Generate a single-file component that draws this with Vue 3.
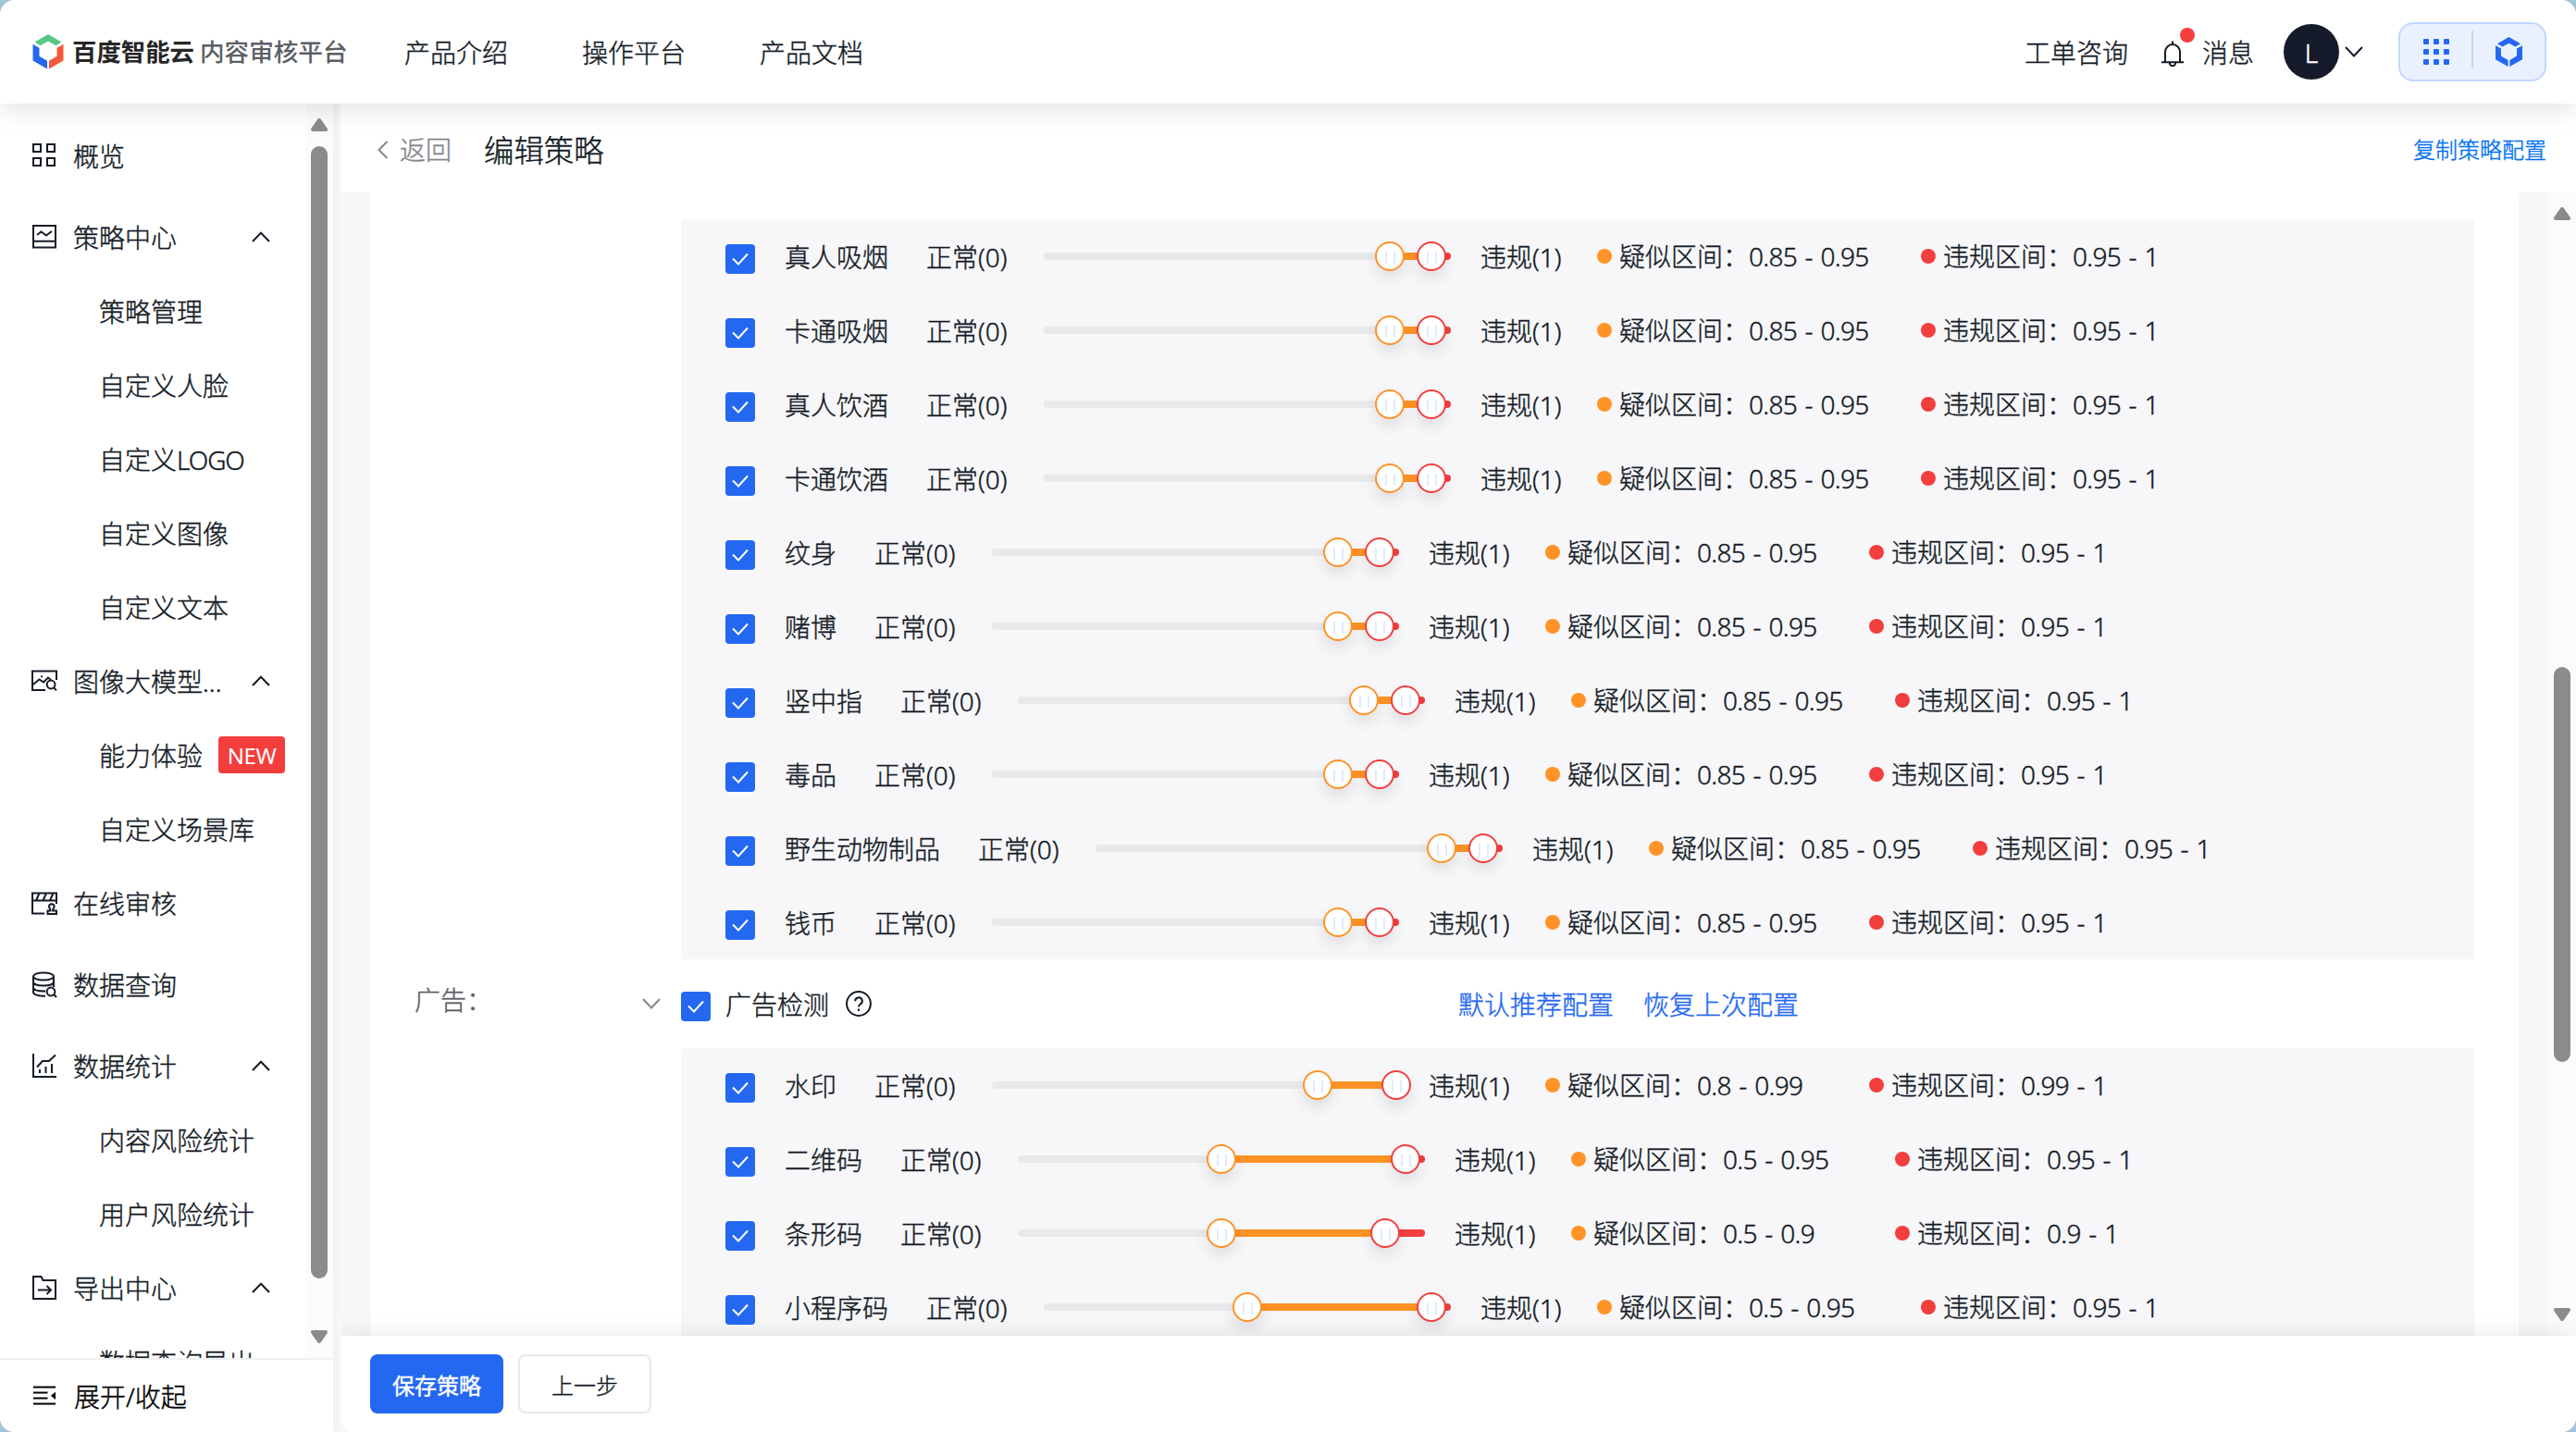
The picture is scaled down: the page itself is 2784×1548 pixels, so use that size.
<template>
  <div class="window">
    <header class="topbar">
      <div class="brand">
        <svg class="brand-mark" viewBox="0 0 34 38">
          <path fill="#57c785" d="M17 0L31.5 8.4L25.5 12.2L17 7.6L8.5 12.2L2.5 8.4z" />
          <path fill="#2468f2" d="M0.5 10.8L7.5 14.8V23.8L16 28.8V37.5L0.5 28.6z" />
          <path fill="#f15a3a" d="M33.5 10.8L26.5 14.8V23.8L18 28.8V37.5L33.5 28.6z" />
        </svg>
        <span class="brand-name">百度智能云</span>
        <span class="brand-sub">内容审核平台</span>
      </div>
      <nav class="topnav">
        <a v-for="link in topLinks" :key="link">{{ link }}</a>
      </nav>
      <div class="topbar-right">
        <span class="ticket">工单咨询</span>
        <span class="message">
          <span class="bell-wrap">
            <svg class="bell" viewBox="0 0 24 28">
              <path d="M12 0.5V4M4 23V12.5a8 8.5 0 0 1 16 0V23M0 23.2H24M8.8 24a3.2 3.2 0 0 0 6.4 0" />
            </svg>
            <i class="bell-dot"></i>
          </span>
          <span class="ticket">消息</span>
        </span>
        <span class="account">
          <span class="avatar">L</span>
          <svg class="account-arrow" viewBox="0 0 20 12"><path d="M1 1L10 10.5L19 1" /></svg>
        </span>
        <div class="switcher">
          <svg class="apps" viewBox="0 0 28 28">
            <template v-for="row in 3" :key="row">
              <rect v-for="col in 3" :key="col" :x="(col - 1) * 11" :y="(row - 1) * 11" width="6" height="6" rx="1" />
            </template>
          </svg>
          <i class="switcher-line"></i>
          <svg class="switcher-mark" viewBox="0 0 29 32">
            <path d="M14.5 0L27 7.2L21.5 10.5L14.5 6.8L7.5 10.5L2 7.2z" />
            <path d="M0 9.3L6 12.6V20.5L13.6 25V32L0 24.2z" />
            <path d="M29 9.3L23 12.6V20.5L15.4 25V32L29 24.2z" />
          </svg>
        </div>
      </div>
    </header>

    <div class="body">
      <aside class="sidebar">
        <div class="menu-scroll">
          <ul class="menu">
            <template v-for="group in menu" :key="group.label">
              <li class="menu-item" :class="{ leaf: !group.children }">
                <svg class="menu-icon" viewBox="0 0 28 28"><path :d="icons[group.icon]" /></svg>
                <span class="menu-label">{{ group.label }}</span>
                <svg v-if="group.children" class="menu-arrow" viewBox="0 0 20 12">
                  <path d="M1 11L10 1.8L19 11" />
                </svg>
              </li>
              <li v-for="child in group.children" :key="child.label" class="menu-item sub">
                <span class="menu-label">{{ child.label }}<span v-if="child.latin" class="latin">{{ child.latin }}</span></span>
                <span v-if="child.isNew" class="new-tag">NEW</span>
              </li>
            </template>
          </ul>
          <div class="scrollbar">
            <svg class="scroll-arrow" viewBox="0 0 18 14"><path d="M9 2L16 12H2z" /></svg>
            <i class="thumb"></i>
            <svg class="scroll-arrow end" viewBox="0 0 18 14"><path d="M9 12L2 2H16z" /></svg>
          </div>
        </div>
        <div class="collapse">
          <svg class="collapse-icon" viewBox="0 0 24 22">
            <path class="line" d="M0 1.5H24M0 7.5H15.5M0 13.5H15.5M0 19.5H24" />
            <path d="M24 6.5V15L19 10.7z" />
          </svg>
          <span class="menu-label">展开/收起</span>
        </div>
      </aside>

      <main class="main">
        <div class="page-head">
          <span class="back">
            <svg class="back-arrow" viewBox="0 0 12 20"><path d="M10.5 1L1.5 10L10.5 19" /></svg>
            返回
          </span>
          <h1>编辑策略</h1>
          <a class="copy">复制策略配置</a>
        </div>

        <div class="content">
          <div class="card">
            <template v-for="section in sections" :key="section.id">
              <div v-if="section.title" class="section-head">
                <span class="section-name">{{ section.name }}</span>
                <svg class="section-arrow" viewBox="0 0 20 12"><path d="M1 1L10 10.5L19 1" /></svg>
                <span class="checkbox">
                  <svg viewBox="0 0 32 32"><path d="M8 15.5L14 21.5L24 10.5" /></svg>
                </span>
                <span class="section-title">{{ section.title }}</span>
                <svg class="help" viewBox="0 0 28 28">
                  <circle cx="14" cy="14" r="12.9" />
                  <path d="M10.2 11.2a3.8 3.8 0 1 1 5.6 3.3c-1.2.7-1.8 1.4-1.8 3M14 19.6V22" />
                </svg>
                <div class="section-links">
                  <a>默认推荐配置</a>
                  <a>恢复上次配置</a>
                </div>
              </div>
              <div class="panel">
                <div v-for="row in section.rows" :key="row.name" class="row">
                  <span class="checkbox">
                    <svg viewBox="0 0 32 32"><path d="M8 15.5L14 21.5L24 10.5" /></svg>
                  </span>
                  <span class="row-name">{{ row.name }}</span>
                  <span class="normal">正常(0)</span>
                  <div class="slider">
                    <i class="bar suspect" :style="{ left: percent(row.low), width: percent(row.high - row.low) }"></i>
                    <i class="bar violate" :style="{ left: percent(row.high), width: percent(1 - row.high) }"></i>
                    <i class="knob" :style="{ left: percent(row.low) }"></i>
                    <i class="knob high" :style="{ left: percent(row.high) }"></i>
                  </div>
                  <span class="bad">违规(1)</span>
                  <span class="range first"><i class="dot suspect"></i>疑似区间：<b>{{ row.low }} - {{ row.high }}</b></span>
                  <span class="range"><i class="dot violate"></i>违规区间：<b>{{ row.high }} - 1</b></span>
                </div>
              </div>
            </template>
          </div>
          <div class="scrollbar">
            <svg class="scroll-arrow" viewBox="0 0 18 14"><path d="M9 2L16 12H2z" /></svg>
            <i class="thumb"></i>
            <svg class="scroll-arrow end" viewBox="0 0 18 14"><path d="M9 12L2 2H16z" /></svg>
          </div>
        </div>

        <footer class="actions">
          <button class="btn primary">保存策略</button>
          <button class="btn">上一步</button>
        </footer>
      </main>
    </div>
  </div>
</template>

<script setup>
const topLinks = ['产品介绍', '操作平台', '产品文档']

const icons = {
  overview: 'M2 2H10V10H2zM17 2H25V10H17zM2 17H10V25H2zM17 17H25V25H17z',
  policy: 'M2 2H26V25.5H2zM2 18.8H26M6 12L10.5 8.5L16 12.5L22 8',
  image: 'M15 24H1V3.5H27V13M1 18.5L8.5 12.5L13 15.5L18 10.5L21 13M11 8.6V10.2M25.5 18a4.4 4.4 0 1 1-8.8 0a4.4 4.4 0 1 1 8.8 0M24.2 21.3L27 24.4',
  review: 'M14 25.5H1V3.5H27V15M1 11.5H27M8.5 3.5L5 11.5M16 3.5L12.5 11.5M23.5 3.5L20 11.5M17.5 26V22.5H20.5C21 20.5 19 20 19 18a2.8 2.8 0 1 1 5.6 0c0 2-2 2.5-1.5 4.5H27V26z',
  query: 'M2 5.5a11 4 0 0 1 22 0a11 4 0 0 1-22 0V22.5C2 25 7 27 15 26.8M24 5.5V17M2 11.5c0 2.5 5 4 11 4s11-1.5 11-4M2 17.5c0 2.5 5 4 13 4M25.4 22a4.4 4.4 0 1 1-8.8 0a4.4 4.4 0 1 1 8.8 0M24.2 25L27 28',
  stats: 'M2 1V26H27M9 18V22M15.5 15V22M22 12V22M6 15.5L12 9H19L26 2.5',
  output: 'M2 26V2H10.5L12.5 6H26V26zM7 16.5H20.5M16.5 12L21 16.5L16.5 21'
}

const menu = [
  { label: '概览', icon: 'overview' },
  {
    label: '策略中心',
    icon: 'policy',
    children: [
      { label: '策略管理' },
      { label: '自定义人脸' },
      { label: '自定义', latin: 'LOGO' },
      { label: '自定义图像' },
      { label: '自定义文本' }
    ]
  },
  {
    label: '图像大模型...',
    icon: 'image',
    children: [{ label: '能力体验', isNew: true }, { label: '自定义场景库' }]
  },
  { label: '在线审核', icon: 'review' },
  { label: '数据查询', icon: 'query' },
  {
    label: '数据统计',
    icon: 'stats',
    children: [{ label: '内容风险统计' }, { label: '用户风险统计' }]
  },
  { label: '导出中心', icon: 'output', children: [{ label: '数据查询导出' }] }
]

const sections = [
  {
    id: 'scene',
    rows: [
      { name: '真人吸烟', low: 0.85, high: 0.95 },
      { name: '卡通吸烟', low: 0.85, high: 0.95 },
      { name: '真人饮酒', low: 0.85, high: 0.95 },
      { name: '卡通饮酒', low: 0.85, high: 0.95 },
      { name: '纹身', low: 0.85, high: 0.95 },
      { name: '赌博', low: 0.85, high: 0.95 },
      { name: '竖中指', low: 0.85, high: 0.95 },
      { name: '毒品', low: 0.85, high: 0.95 },
      { name: '野生动物制品', low: 0.85, high: 0.95 },
      { name: '钱币', low: 0.85, high: 0.95 }
    ]
  },
  {
    id: 'ad',
    name: '广告：',
    title: '广告检测',
    rows: [
      { name: '水印', low: 0.8, high: 0.99 },
      { name: '二维码', low: 0.5, high: 0.95 },
      { name: '条形码', low: 0.5, high: 0.9 },
      { name: '小程序码', low: 0.5, high: 0.95 }
    ]
  }
]

const percent = (value) => `${(value * 100).toFixed(2)}%`
</script>

<style>
body {
  margin: 0;
  background: #a3c5da;
}
</style>

<style scoped>
.window {
  display: flex;
  flex-direction: column;
  height: 1548px;
  overflow: hidden;
  border-radius: 16px;
  background: #fff;
  color: #151b26;
  font-family: "Noto Sans", "Noto Sans CJK SC", sans-serif;
  font-size: 28px;
  font-weight: 300;
  line-height: 40px;
  -webkit-text-stroke: 0.4px currentColor;
}

svg {
  display: block;
  flex: none;
  fill: none;
  stroke: currentColor;
  stroke-width: 2;
}

i {
  flex: none;
}

/* top bar */
.topbar {
  position: relative;
  z-index: 3;
  display: flex;
  align-items: center;
  flex: none;
  height: 112px;
  box-sizing: border-box;
  padding: 0 32px 0 35px;
  background: #fff;
  box-shadow: 0 8px 24px rgba(0, 0, 0, 0.1);
}

.brand {
  display: flex;
  align-items: center;
  width: 402px;
  -webkit-text-stroke: 0;
}

.brand-mark {
  width: 34px;
  height: 38px;
  margin-right: 9px;
  stroke: none;
}

.brand-name {
  margin-right: 6px;
  color: #262626;
  font-size: 26.4px;
  font-weight: 700;
}

.brand-sub {
  color: #5c5f66;
  font-size: 26.6px;
  font-weight: 500;
}

.topnav {
  display: flex;
  gap: 80px;
  padding-top: 2px;
}

.topbar-right {
  display: flex;
  align-items: center;
  margin-left: auto;
}

.ticket {
  padding-top: 2px;
}

.message {
  display: flex;
  align-items: center;
  margin-left: 36px;
}

.bell-wrap {
  position: relative;
  margin-right: 20px;
}

.bell {
  width: 24px;
  height: 28px;
  margin-top: 4px;
}

.bell-dot {
  position: absolute;
  top: -10px;
  left: 20px;
  width: 16px;
  height: 16px;
  border-radius: 50%;
  background: #f33e3e;
}

.account {
  display: flex;
  align-items: center;
  margin: 0 38px 0 32px;
}

.avatar {
  width: 60px;
  height: 60px;
  border-radius: 50%;
  background: #151b2b;
  color: #fff;
  line-height: 62px;
  text-align: center;
}

.account-arrow {
  width: 20px;
  height: 12px;
  margin-left: 6px;
}

.switcher {
  display: flex;
  align-items: center;
  box-sizing: border-box;
  width: 160px;
  height: 64px;
  padding: 0 24px 0 25px;
  border: 2px solid #c2d7ff;
  border-radius: 16px;
  background: #e9f1ff;
}

.apps,
.switcher-mark {
  fill: #2468f2;
  stroke: none;
}

.apps {
  width: 28px;
  height: 28px;
}

.switcher-line {
  width: 2px;
  height: 40px;
  margin: -6px 24px 0;
  background: #cdd6e4;
}

.switcher-mark {
  width: 29px;
  height: 32px;
}

.body {
  display: flex;
  flex: 1;
  min-height: 0;
  background: #f7f7f8;
}

/* sidebar */
.sidebar {
  display: flex;
  flex-direction: column;
  flex: none;
  width: 360px;
  margin-right: 8px;
  background: #fff;
  box-shadow: 0 0 8px rgba(0, 0, 0, 0.06);
}

.menu-scroll {
  display: flex;
  flex: 1;
  min-height: 0;
  overflow: hidden;
}

.menu {
  flex: 1;
  margin: 0;
  padding: 16px 0 0;
  list-style: none;
}

.menu-item {
  display: flex;
  align-items: center;
  height: 80px;
  box-sizing: border-box;
  padding: 0 38px 0 34px;
  white-space: nowrap;
}

.menu-item.leaf {
  margin-bottom: 8px;
}

.menu-item.sub {
  padding: 0 0 0 107px;
}

.menu-icon {
  width: 28px;
  height: 28px;
  margin-right: 17px;
  overflow: visible;
}

.menu-label {
  padding-top: 2px;
}

.latin {
  letter-spacing: -1.1px;
}

.menu-arrow {
  width: 20px;
  height: 12px;
  margin-left: auto;
}

.new-tag {
  width: 72px;
  height: 40px;
  margin-left: 17px;
  border-radius: 4px;
  background: #f33e3e;
  color: #fff;
  font-size: 24px;
  font-weight: 400;
  line-height: 42px;
  letter-spacing: -0.5px;
  text-align: center;
  -webkit-text-stroke: 0;
}

.scrollbar {
  display: flex;
  flex-direction: column;
  align-items: center;
  flex: none;
  width: 30px;
  box-sizing: border-box;
  background: #fbfbfb;
}

.scroll-arrow {
  width: 18px;
  height: 14px;
  fill: #8b8b8b;
  stroke: #8b8b8b;
  stroke-width: 4;
  stroke-linejoin: round;
}

.scroll-arrow.end {
  margin-top: auto;
}

.thumb {
  width: 18px;
  border-radius: 9px;
  background: #8b8b8b;
}

.menu-scroll .scrollbar {
  padding: 16px 0;
}

.menu-scroll .thumb {
  height: 1224px;
  margin-top: 16px;
}

.collapse {
  display: flex;
  align-items: center;
  flex: none;
  height: 80px;
  box-sizing: border-box;
  padding: 0 0 0 36px;
  border-top: 2px solid #f0f0f1;
  color: #000;
}

.collapse-icon {
  width: 24px;
  height: 22px;
  margin-right: 20px;
  fill: #000;
  stroke: none;
}

.collapse-icon .line {
  stroke: #000;
  stroke-width: 2;
}

/* main area */
.main {
  display: flex;
  flex-direction: column;
  flex: 1;
  min-width: 0;
  overflow: hidden;
  border-bottom-left-radius: 16px;
  background: #fff;
}

.page-head {
  display: flex;
  align-items: center;
  flex: none;
  height: 96px;
  box-sizing: border-box;
  padding: 4px 32px 0 40px;
}

.back {
  display: flex;
  align-items: center;
  color: #84868c;
}

.back-arrow {
  width: 12px;
  height: 20px;
  margin-right: 12px;
}

h1 {
  margin: 0 0 0 35px;
  font-size: 32.4px;
  font-weight: 300;
  line-height: 48px;
}

.copy {
  margin-left: auto;
  color: #0070f0;
  font-size: 24px;
}

.content {
  display: flex;
  flex: 1;
  min-height: 0;
  overflow: hidden;
  background: #f6f7f9;
}

.card {
  flex: 1;
  margin: 0 32px;
  padding: 29px 48px 0;
  background: #fff;
}

.content .scrollbar {
  padding: 16px 0;
}

.content .thumb {
  height: 427px;
  margin-top: 483px;
}

.panel {
  margin-left: 288px;
  padding-left: 48px;
  background: #f7f7f9;
}

.row {
  display: flex;
  align-items: center;
  height: 80px;
}

.checkbox {
  flex: none;
  width: 32px;
  height: 32px;
  border-radius: 4px;
  background: #2468f2;
  color: #fff;
}

.row .checkbox {
  margin: 6px 32px 0 0;
}

.row-name,
.normal,
.bad {
  padding-top: 1px;
}

.normal {
  width: 88px;
  margin: 0 39px 0 41px;
  white-space: nowrap;
}

.slider {
  position: relative;
  width: 440px;
  height: 8px;
  border-radius: 4px;
  background: #e8e9eb;
}

.bar {
  position: absolute;
  top: 0;
  height: 8px;
}

.bar.violate {
  border-radius: 0 4px 4px 0;
}

.suspect {
  background: #ff9326;
}

.violate {
  background: #f33e3e;
}

.knob {
  position: absolute;
  top: -12px;
  width: 32px;
  height: 32px;
  box-sizing: border-box;
  margin-left: -16px;
  border: 2px solid #ff9326;
  border-radius: 50%;
  background: #fff;
  box-shadow: 0 8px 16px rgba(7, 12, 20, 0.1);
}

.knob.high {
  margin-left: -15px;
  border-color: #f33e3e;
}

/* grip lines on the knob */
.knob::after {
  content: "";
  position: absolute;
  top: 9px;
  left: 9px;
  width: 7px;
  height: 13px;
  border: solid #dfebff;
  border-width: 0 2px;
}

.bad {
  width: 126px;
  margin-left: 32px;
}

.range {
  display: flex;
  align-items: center;
  white-space: nowrap;
}

.range.first {
  width: 350px;
}

.range b {
  font-weight: 300;
  letter-spacing: -0.7px;
  word-spacing: 2px;
}

.dot {
  width: 16px;
  height: 16px;
  margin-right: 8px;
  border-radius: 50%;
}

.section-head {
  display: flex;
  align-items: center;
  height: 96px;
}

.section-name {
  width: 246px;
  margin-top: -8px;
  color: #5c5f66;
}

.section-arrow {
  width: 20px;
  height: 12px;
  margin-right: 22px;
  color: #84868c;
}

.section-head .checkbox {
  margin: 6px 16px 0 0;
}

.section-title,
.section-links {
  padding-top: 2px;
}

.help {
  width: 28px;
  height: 28px;
  margin-left: 18px;
}

.section-links {
  display: flex;
  gap: 32px;
  margin-left: 634px;
  color: #2468f2;
}

.actions {
  position: relative;
  display: flex;
  gap: 16px;
  flex: none;
  height: 104px;
  box-sizing: border-box;
  padding: 20px 32px;
  background: #fff;
  box-shadow: 0 0 24px rgba(7, 12, 20, 0.1);
}

.btn {
  width: 144px;
  height: 64px;
  padding: 0;
  border: 2px solid #e8e9eb;
  border-radius: 8px;
  background: #fff;
  color: #151b26;
  font-family: inherit;
  font-size: 24px;
  font-weight: 300;
}

.btn.primary {
  border-color: #2468f2;
  background: #2468f2;
  color: #fff;
  font-weight: 400;
}
</style>
